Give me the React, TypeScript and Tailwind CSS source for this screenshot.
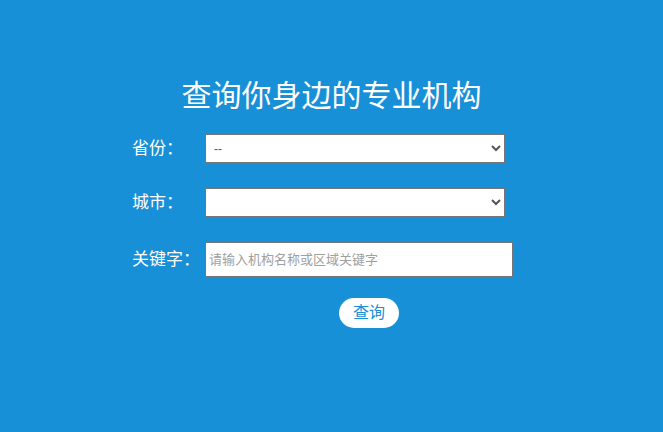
const fieldLabel = 'w-[73px] shrink-0 text-[17px] text-white';

export default function App() {
  return (
    <div
      className="flex h-[432px] w-full flex-col items-center bg-[#1890d8] pt-[77px]"
      style={{ fontFamily: '"Liberation Sans", "Noto Sans CJK SC", sans-serif' }}
    >
      <h1 className="text-[30px] leading-[38px] text-white">查询你身边的专业机构</h1>

      <form className="mt-[19px] flex w-[381px] translate-x-[-9px] flex-col">
        <div className="flex items-center">
          <label className={fieldLabel}>省份：</label>
          <select className="h-[29px] w-[300px] border border-[#767676] bg-white pl-1 text-[12px] text-[#555]">
            <option>--</option>
          </select>
        </div>

        <div className="mt-[25px] flex items-center">
          <label className={fieldLabel}>城市：</label>
          <select className="h-[29px] w-[300px] border border-[#767676] bg-white pl-1 text-[12px] text-[#555]">
            <option></option>
          </select>
        </div>

        <div className="mt-[25px] flex items-center">
          <label className={fieldLabel}>关键字：</label>
          <input
            className="h-[35px] w-[308px] border border-[#767676] bg-white px-[3px] text-[13px] text-[#333] placeholder:text-[#a0a0a0]"
            placeholder="请输入机构名称或区域关键字"
          />
        </div>

        <div className="mt-[21px] flex pl-[207px]">
          <button
            type="button"
            className="h-[30px] w-[60px] rounded-full bg-white text-[16px] text-[#1890d8]"
          >
            查询
          </button>
        </div>
      </form>
    </div>
  );
}
